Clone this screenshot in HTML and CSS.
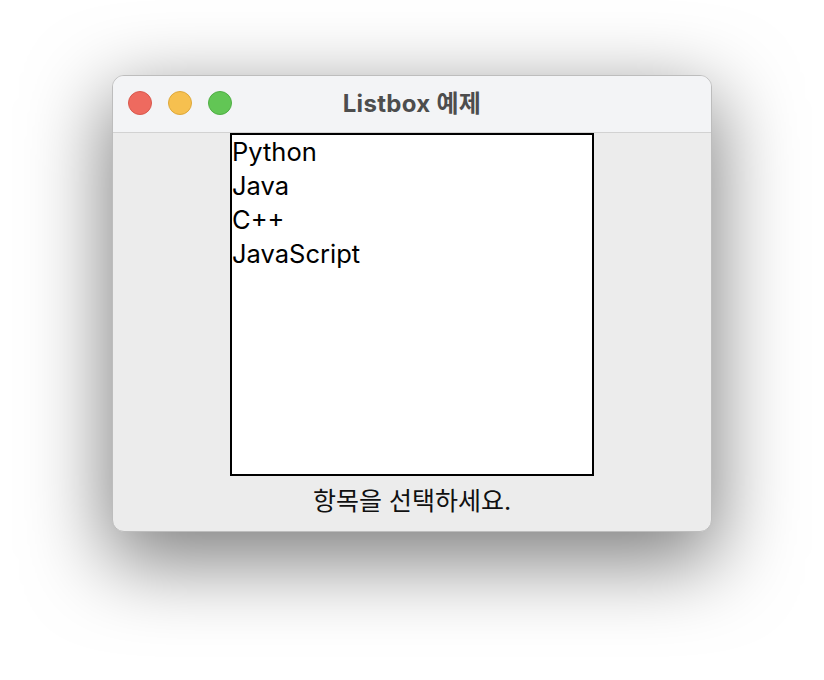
FILE: index.html
```html
<!DOCTYPE html>
<html lang="ko">
<head>
    <meta charset="UTF-8">
    <title>Listbox 예제</title>
    <link rel="stylesheet" href="styles.css">
</head>
<body>

    <!-- Window -->
    <div class="window">
        <div class="titlebar">
            <div class="lights">
                <span class="light red"></span>
                <span class="light yellow"></span>
                <span class="light green"></span>
            </div>
            <div class="title">Listbox 예제</div>
        </div>

        <div class="content">
            <ul class="listbox">
                <li>Python</li>
                <li>Java</li>
                <li>C++</li>
                <li>JavaScript</li>
            </ul>
            <div class="status">항목을 선택하세요.</div>
        </div>
    </div>

</body>
</html>
```

FILE: styles.css
```css
html, body {
    min-height: 680px;
}

body {
    margin: 0;
    padding: 0;
    background-color: #ffffff;
    font-family: Inter, "Noto Sans CJK KR", sans-serif;
    overflow: hidden;
}

/* Window */
.window {
    width: 600px;
    height: 457px;
    margin: 75px 0 0 112px;
    box-sizing: border-box;
    border: 1px solid #bdbdbd;
    border-radius: 12px;
    background-color: #ececec;
    overflow: hidden;
    box-shadow: 0 25px 80px 5px rgba(0, 0, 0, 0.5);
}

.titlebar {
    position: relative;
    height: 57px;
    box-sizing: border-box;
    padding-bottom: 6px;
    background-color: #f3f4f6;
    border-bottom: 1px solid #d2d2d2;
    display: flex;
    align-items: center;
    justify-content: center;
}

.lights {
    position: absolute;
    left: 15px;
    top: 15px;
    display: flex;
    gap: 16px;
}

.light {
    width: 24px;
    height: 24px;
    border-radius: 50%;
    box-sizing: border-box;
}

.red {
    background-color: #ee6a5f;
    border: 1px solid #d9584d;
}

.yellow {
    background-color: #f6c04f;
    border: 1px solid #dea83a;
}

.green {
    background-color: #62c655;
    border: 1px solid #4fae44;
}

.title {
    font-size: 24px;
    font-weight: bold;
    color: #4d4d4d;
    letter-spacing: 0.3px;
}

/* Content */
.content {
    display: flex;
    flex-direction: column;
    align-items: center;
}

.listbox {
    width: 364px;
    height: 343px;
    box-sizing: border-box;
    margin: 0;
    padding: 0;
    list-style: none;
    background-color: #ffffff;
    border: 2px solid #000000;
}

.listbox li {
    font-size: 25.5px;
    line-height: 34px;
    color: #000000;
}

.status {
    margin-top: 5px;
    font-size: 25px;
    color: #111111;
}
```
